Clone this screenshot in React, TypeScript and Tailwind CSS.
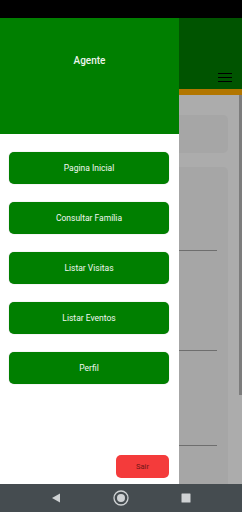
export default function App() {
  const items = ["Pagina Inicial", "Consultar Família", "Listar Visitas", "Listar Eventos", "Perfil"];

  return (
    <div className="flex h-[512px] w-[242px] flex-col overflow-hidden bg-white font-['Roboto',sans-serif]">
      {/* status bar */}
      <div className="h-[18px] shrink-0 bg-black" />

      <div className="flex h-[466px] shrink-0">
        {/* drawer */}
        <div className="flex w-[179px] shrink-0 flex-col bg-white">
          <div className="flex h-[116px] shrink-0 justify-center bg-[#007f00] pt-[35px]">
            <span className="text-[10px] font-medium text-[#eef5ee]">Agente</span>
          </div>

          <div className="flex flex-1 flex-col gap-[18px] pl-[9px] pr-[10px] pt-[18px]">
            {items.map((label) => (
              <button
                key={label}
                className="flex h-[32px] items-center justify-center rounded-[5px] bg-[#007f00] text-[8.5px] text-[#f2f7f2] shadow-[0_0_1px_rgba(0,0,0,0.35)]"
              >
                {label}
              </button>
            ))}
          </div>

          <div className="flex justify-end pb-[6px] pr-[10px]">
            <button className="flex h-[23px] w-[53px] items-center justify-center rounded-[5px] bg-[#f43b3b] text-[7.5px] text-[#6e1616]">
              Sair
            </button>
          </div>
        </div>

        {/* dimmed page behind the drawer */}
        <div className="flex flex-1 flex-col bg-[#acacac]">
          <div className="flex h-[71px] shrink-0 items-end justify-end bg-[#005400] pb-[7px] pr-[10px]">
            <div className="flex w-[14px] flex-col gap-[3px]">
              <span className="h-[1px] bg-black" />
              <span className="h-[1px] bg-black" />
              <span className="h-[1px] bg-black" />
            </div>
          </div>
          <div className="h-[6px] shrink-0 bg-[#b27600]" />

          <div className="flex flex-1">
            <div className="flex flex-1 flex-col gap-[14px] pr-[11px] pt-[20px]">
              <div className="h-[38px] rounded-r-[5px] bg-[#a6a6a6]" />
              <div className="flex flex-1 flex-col rounded-tr-[5px] bg-[#a6a6a6] pr-[11px]">
                <div className="h-[83px]" />
                <div className="h-[1px] bg-[#6e6e6e]" />
                <div className="h-[99px]" />
                <div className="h-[1px] bg-[#6e6e6e]" />
                <div className="h-[94px]" />
                <div className="h-[1px] bg-[#6e6e6e]" />
              </div>
            </div>
            <div className="flex w-[3px] flex-col">
              <div className="h-[300px] bg-[#7c7c7c]" />
            </div>
          </div>
        </div>
      </div>

      {/* navigation bar */}
      <div className="flex h-[28px] shrink-0 items-center bg-[#454c50]">
        <div className="flex w-full items-center justify-between px-[51px]">
          <svg width="10" height="10" viewBox="0 0 10 10">
            <path d="M1 5 L9 0.5 L9 9.5 Z" fill="#cfd2d4" />
          </svg>
          <svg width="16" height="16" viewBox="0 0 16 16">
            <circle cx="8" cy="8" r="7" fill="none" stroke="#cfd2d4" strokeWidth="1.3" />
            <circle cx="8" cy="8" r="4" fill="#cfd2d4" />
          </svg>
          <svg width="10" height="10" viewBox="0 0 10 10">
            <rect x="0.5" y="0.5" width="9" height="9" rx="0.5" fill="#cfd2d4" />
          </svg>
        </div>
      </div>
    </div>
  );
}
